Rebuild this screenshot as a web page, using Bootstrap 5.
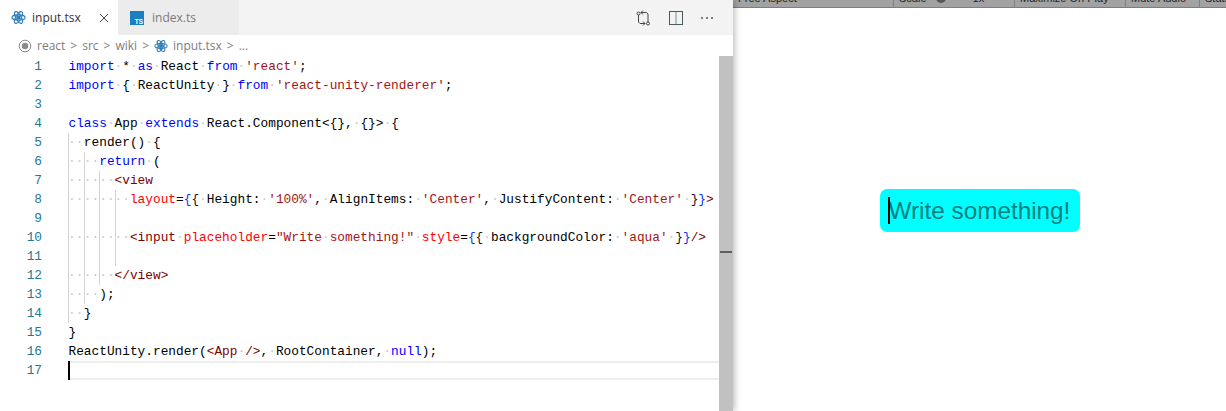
<!DOCTYPE html>
<html lang="en"><head><meta charset="utf-8"><title>input.tsx</title>
<link rel="stylesheet" href="https://cdn.jsdelivr.net/npm/bootstrap@5.3.0/dist/css/bootstrap.min.css">
<style>
html,body{height:100%;overflow:hidden;background:#fff}
.shell{height:411px;width:1226px}
.editor{width:733px;height:411px;flex:none;box-shadow:2px 0 6px rgba(0,0,0,.25);z-index:1;background:#fff}
.tabbar{height:35px;flex:none;background:#f3f3f3;font:12px "Open Sans",sans-serif}
.vtab{height:35px;padding-left:11px}
.vtab.on{width:118px;background:#fff;color:#333;gap:6px}
.vtab.off{width:121px;background:#ececec;color:#7a7a7a;padding-left:12px;gap:8px}
.closex{margin-left:12px}
.actions{gap:16px;padding-right:18px}
.gitico{margin-right:2px}
.crumbs{height:21px;flex:none;font:12px "Open Sans",sans-serif;color:#7d7d7d;padding-left:18px;gap:5px}
.codewrap{min-height:0;overflow:hidden}
.numcol{width:68px;flex:none;padding-top:1px}
.numcol div{height:19px;text-align:right;padding-right:26px;color:#237893;font:12.8px/19px "Liberation Mono",monospace}
.codecol{font:12.8px/19px "Liberation Mono",monospace;color:#000;min-width:0;padding-top:1px}
.ln{height:19px;white-space:pre;padding-left:.5px}
.ln.cur{box-shadow:inset 0 2px 0 #eee,inset 0 -2px 0 #eee;width:651px;position:relative}
.caret1{position:absolute;left:0;top:0;width:2px;height:19px;background:#000}
.gd{display:inline-block;height:19px;width:15.36px;box-shadow:inset 1px 0 0 #d3d3d3;vertical-align:top}
.gd:first-child{margin-left:-.5px;width:15.86px}
.w{color:#c9c9c9}
.k{color:#0000ff}.s{color:#a31515}.t{color:#800000}.a{color:#ff0000}.b1{color:#0431fa}.b2{color:#111}
.bar{width:14px;flex:none;background:#c1c1c1;position:relative}
.tick{position:absolute;left:1px;right:1px;top:195px;height:2px;background:#606060}
.game{min-width:0}
.gamebar{height:8px;flex:none;background:#a2a2a2;border-bottom:1px solid #7e7e7e;font:11px/11px "Liberation Sans",sans-serif;color:#222;overflow:hidden;white-space:nowrap}
.cell{height:8px;border-right:1px solid #7e7e7e;padding-left:5px;flex:none}
.cell>span{display:block;margin-top:-7px}
.knob{display:inline-block;width:10px;height:10px;border-radius:50%;background:#555;margin-left:9px;vertical-align:-1px}
.onex{margin-left:27px}
.stage{min-height:0;padding-top:2px}
.aquabox{width:200px;height:43px;background:#0ff;border-radius:7px;padding-left:9px;position:relative;color:#008080;font:24.3px/43px "Liberation Sans",sans-serif;white-space:nowrap}
.caret2{position:absolute;left:8px;top:8px;width:2px;height:27px;background:#000}
</style></head><body>
<div class="shell d-flex">
<div class="editor d-flex flex-column">
 <div class="tabbar d-flex align-items-center">
  <div class="vtab on d-flex align-items-center">
   <svg width="15" height="15" viewBox="0 0 16 16" fill="none" stroke="#2d7cb8" stroke-width="1.2"><circle cx="8" cy="8" r="1.6" fill="#2d7cb8"/><ellipse cx="8" cy="8" rx="7" ry="2.8"/><ellipse cx="8" cy="8" rx="7" ry="2.8" transform="rotate(60 8 8)"/><ellipse cx="8" cy="8" rx="7" ry="2.8" transform="rotate(120 8 8)"/></svg>
   <span>input.tsx</span>
   <svg class="closex" width="10" height="10" viewBox="0 0 10 10" stroke="#444" stroke-width="1"><path d="M1 1l8 8M9 1l-8 8"/></svg>
  </div>
  <div class="vtab off d-flex align-items-center">
   <svg width="14" height="14" viewBox="0 0 14 14"><rect width="14" height="14" fill="#1a7fc1"/><text x="13" y="12.5" font-size="6.5" font-weight="700" text-anchor="end" fill="#fff" font-family="Liberation Sans">TS</text></svg>
   <span>index.ts</span>
  </div>
  <div class="actions d-flex align-items-center ms-auto">
   <svg class="gitico" width="16" height="16" viewBox="0 0 16 16" fill="none" stroke="#444" stroke-width="1"><circle cx="3.5" cy="3.5" r="1.5"/><circle cx="13" cy="13.5" r="1.5"/><path d="M3.5 5v7l1.5 1.5h5M8 11.5l2 2-2 2"/><path d="M13 12V4l-1.5-1.5H6M8 .5l-2 2 2 2"/></svg>
   <svg width="14" height="14" viewBox="0 0 14 14" fill="none"><rect x=".5" y=".5" width="13" height="13" stroke="#4b5a5a"/><path d="M7 1v12" stroke="#7a8a8a"/></svg>
   <svg width="16" height="16" viewBox="0 0 16 16" fill="#555"><circle cx="3" cy="8" r="1"/><circle cx="8" cy="8" r="1"/><circle cx="13" cy="8" r="1"/></svg>
  </div>
 </div>
 <div class="crumbs d-flex align-items-center">
  <svg width="14" height="14" viewBox="0 0 14 14" fill="none" stroke="#8a8a8a"><circle cx="7" cy="7" r="5.8"/><circle cx="7" cy="7" r="3.2" fill="#8a8a8a" stroke="none"/></svg>
  <span>react</span><span>&gt;</span><span>src</span><span>&gt;</span><span>wiki</span><span>&gt;</span>
  <svg width="14" height="14" viewBox="0 0 16 16" fill="none" stroke="#2d7cb8" stroke-width="1.2"><circle cx="8" cy="8" r="1.6" fill="#2d7cb8"/><ellipse cx="8" cy="8" rx="7" ry="2.8"/><ellipse cx="8" cy="8" rx="7" ry="2.8" transform="rotate(60 8 8)"/><ellipse cx="8" cy="8" rx="7" ry="2.8" transform="rotate(120 8 8)"/></svg>
  <span>input.tsx</span><span>&gt;</span><span>...</span>
 </div>
 <div class="codewrap d-flex flex-grow-1">
  <div class="numcol">
   <div>1</div><div>2</div><div>3</div><div>4</div><div>5</div><div>6</div><div>7</div><div>8</div><div>9</div><div>10</div><div>11</div><div>12</div><div>13</div><div>14</div><div>15</div><div>16</div><div>17</div>
  </div>
  <div class="codecol flex-grow-1">
<div class="ln"><span class="k">import</span><span class="w">·</span>*<span class="w">·</span><span class="k">as</span><span class="w">·</span>React<span class="w">·</span><span class="k">from</span><span class="w">·</span><span class="s">'react'</span>;</div>
<div class="ln"><span class="k">import</span><span class="w">·</span>{<span class="w">·</span>ReactUnity<span class="w">·</span>}<span class="w">·</span><span class="k">from</span><span class="w">·</span><span class="s">'react-unity-renderer'</span>;</div>
<div class="ln"></div>
<div class="ln"><span class="k">class</span><span class="w">·</span>App<span class="w">·</span><span class="k">extends</span><span class="w">·</span>React.Component&lt;{},<span class="w">·</span>{}&gt;<span class="w">·</span>{</div>
<div class="ln"><span class="gd w">··</span>render()<span class="w">·</span>{</div>
<div class="ln"><span class="gd w">··</span><span class="gd w">··</span><span class="k">return</span><span class="w">·</span>(</div>
<div class="ln"><span class="gd w">··</span><span class="gd w">··</span><span class="gd w">··</span><span class="t">&lt;view</span></div>
<div class="ln"><span class="gd w">··</span><span class="gd w">··</span><span class="gd w">··</span><span class="gd w">··</span><span class="a">layout</span>=<span class="b1">{</span><span class="b2">{</span><span class="w">·</span>Height:<span class="w">·</span><span class="s">'100%'</span>,<span class="w">·</span>AlignItems:<span class="w">·</span><span class="s">'Center'</span>,<span class="w">·</span>JustifyContent:<span class="w">·</span><span class="s">'Center'</span><span class="w">·</span><span class="b2">}</span><span class="b1">}</span><span class="t">&gt;</span></div>
<div class="ln"><span class="gd"></span><span class="gd"></span><span class="gd"></span><span class="gd"></span></div>
<div class="ln"><span class="gd w">··</span><span class="gd w">··</span><span class="gd w">··</span><span class="gd w">··</span><span class="t">&lt;input</span><span class="w">·</span><span class="a">placeholder</span>=<span class="s">"Write<span class="w">·</span>something!"</span><span class="w">·</span><span class="a">style</span>=<span class="b1">{</span><span class="b2">{</span><span class="w">·</span>backgroundColor:<span class="w">·</span><span class="s">'aqua'</span><span class="w">·</span><span class="b2">}</span><span class="b1">}</span><span class="t">/&gt;</span></div>
<div class="ln"><span class="gd"></span><span class="gd"></span><span class="gd"></span><span class="gd"></span></div>
<div class="ln"><span class="gd w">··</span><span class="gd w">··</span><span class="gd w">··</span><span class="t">&lt;/view&gt;</span></div>
<div class="ln"><span class="gd w">··</span><span class="gd w">··</span>);</div>
<div class="ln"><span class="gd w">··</span>}</div>
<div class="ln">}</div>
<div class="ln">ReactUnity.render(<span class="t">&lt;App</span><span class="w">·</span><span class="t">/&gt;</span>,<span class="w">·</span>RootContainer,<span class="w">·</span><span class="k">null</span>);</div>
<div class="ln cur"><span class="caret1"></span></div>
  </div>
  <div class="bar"><div class="tick"></div></div>
 </div>
</div>
<div class="game flex-grow-1 d-flex flex-column">
 <div class="gamebar d-flex">
  <div class="cell" style="width:161px"><span>Free Aspect</span></div>
  <div class="cell" style="width:121px"><span>Scale<i class="knob"></i><span class="onex">1x</span></span></div>
  <div class="cell" style="width:111px"><span>Maximize On Play</span></div>
  <div class="cell" style="width:74px"><span>Mute Audio</span></div>
  <div class="cell border-0"><span>Stats</span></div>
 </div>
 <div class="stage flex-grow-1 d-flex align-items-center justify-content-center">
  <div class="aquabox">Write something!<span class="caret2"></span></div>
 </div>
</div>
</div>
<script src="https://cdn.jsdelivr.net/npm/bootstrap@5.3.0/dist/js/bootstrap.bundle.min.js"></script>
</body></html>
